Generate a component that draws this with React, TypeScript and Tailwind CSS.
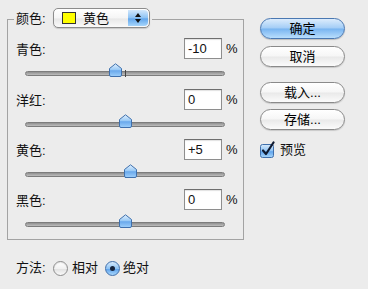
import React from "react";

const rows = [
  { label: "青色:", value: "-10", pos: -10, h: "h-[51px]" },
  { label: "洋红:", value: "0", pos: 0, h: "h-[50px]" },
  { label: "黄色:", value: "+5", pos: 5, h: "h-[50px]" },
  { label: "黑色:", value: "0", pos: 0, h: "h-[50px]" },
];

function Thumb() {
  return (
    <svg width="13" height="14" viewBox="0 0 13 14">
      <defs>
        <linearGradient id="thumbGrad" x1="0" y1="0" x2="0" y2="1">
          <stop offset="0" stopColor="#e4f1fd" />
          <stop offset="0.45" stopColor="#9ccbf6" />
          <stop offset="0.55" stopColor="#6aa9ec" />
          <stop offset="1" stopColor="#9fd0fb" />
        </linearGradient>
      </defs>
      <path d="M0.5 5.5 L6.5 0.8 L12.5 5.5 L12.5 12 Q12.5 13.5 11 13.5 L2 13.5 Q0.5 13.5 0.5 12 Z" fill="url(#thumbGrad)" stroke="#3f70ad" strokeWidth="1" />
    </svg>
  );
}

function Slider({ pos }: { pos: number }) {
  return (
    <div className="relative ml-[17px] mt-[4px] h-[14px] w-[200px]">
      <div className="absolute left-0 right-0 top-[8px] h-[5px] rounded-full border border-[#7c7c7c] bg-[linear-gradient(180deg,#8f8f8f,#bdbdbd)]" />
      <div className="absolute left-[100px] top-[7px] h-[7px] w-px bg-[#444]" />
      <div className="absolute top-0" style={{ left: 100 + pos - 6 }}>
        <Thumb />
      </div>
    </div>
  );
}

function AquaButton({ children, primary }: { children: React.ReactNode; primary?: boolean }) {
  return (
    <button
      className={
        primary
          ? "flex h-[21px] w-[85px] items-center justify-center rounded-full border border-[#4a78b2] bg-[linear-gradient(180deg,#dcecfc_0%,#a3cdf6_48%,#78b4f0_52%,#b9defd_100%)] text-[13px] text-black shadow-[0_1px_1px_rgba(0,0,0,0.2)]"
          : "flex h-[21px] w-[85px] items-center justify-center rounded-full border border-[#8a8a8a] bg-[linear-gradient(180deg,#ffffff_0%,#f6f6f6_48%,#e9e9e9_52%,#fbfbfb_100%)] text-[13px] text-black shadow-[0_1px_1px_rgba(0,0,0,0.15)]"
      }
    >
      {children}
    </button>
  );
}

function Radio({ checked }: { checked?: boolean }) {
  if (checked) {
    return (
      <span className="flex h-[15px] w-[15px] items-center justify-center rounded-full border border-[#3f6fab] bg-[linear-gradient(180deg,#d6eafc_0%,#8ec3f4_50%,#5fa3ec_55%,#a8d6fb_100%)]">
        <span className="h-[5px] w-[5px] rounded-full bg-[#16243d]" />
      </span>
    );
  }
  return (
    <span className="h-[15px] w-[15px] rounded-full border border-[#8c8c8c] bg-[linear-gradient(180deg,#ffffff_0%,#f1f1f1_50%,#e2e2e2_55%,#fafafa_100%)] shadow-[inset_0_1px_1px_rgba(0,0,0,0.1)]" />
  );
}

function Checkbox() {
  return (
    <svg width="17" height="17" viewBox="0 0 17 17">
      <defs>
        <linearGradient id="cbGrad" x1="0" y1="0" x2="0" y2="1">
          <stop offset="0" stopColor="#d8ebfc" />
          <stop offset="0.5" stopColor="#8fc3f4" />
          <stop offset="0.55" stopColor="#60a4ec" />
          <stop offset="1" stopColor="#a9d7fb" />
        </linearGradient>
      </defs>
      <rect x="0.5" y="3.5" width="13" height="13" rx="2" fill="url(#cbGrad)" stroke="#3f6fab" />
      <path d="M3 9.5 L6 13 L13.5 1.5" fill="none" stroke="#0f1a30" strokeWidth="2.2" strokeLinecap="round" strokeLinejoin="round" />
    </svg>
  );
}

export default function App() {
  return (
    <div className="flex h-[289px] w-[368px] overflow-hidden bg-[#ececec] font-['Liberation_Sans','Noto_Sans_CJK_SC',sans-serif] text-[13px] text-[#111]">
      <div className="w-[260px] shrink-0">
        <div className="relative ml-[7px] mt-[19px] h-[221px] w-[237px] border border-[#a3a3a3] pt-[18px]">
          <div className="absolute left-[6px] top-[-12px] flex h-[20px] items-center bg-[#ececec] px-[2px]">
            <span className="w-[37px] leading-none">颜色:</span>
            <div className="flex h-[20px] w-[97px] items-center rounded-[5px] border border-[#8c8c8c] bg-[linear-gradient(180deg,#ffffff_0%,#f5f5f5_50%,#e8e8e8_55%,#fafafa_100%)] shadow-[0_1px_1px_rgba(0,0,0,0.15)]">
              <span className="ml-[8px] h-[12px] w-[14px] border border-[#333] bg-[#ffff00]" />
              <span className="ml-[7px] flex-1 leading-none">黄色</span>
              <span className="mr-[1px] flex h-[16px] w-[20px] flex-col items-center justify-center gap-[2px] rounded-r-[4px] bg-[linear-gradient(180deg,#d3e8fc_0%,#8cc2f4_50%,#62a6ec_55%,#a6d5fb_100%)]">
                <svg width="6" height="4" viewBox="0 0 6 4"><path d="M0 4 L3 0 L6 4 Z" fill="#111" /></svg>
                <svg width="6" height="4" viewBox="0 0 6 4"><path d="M0 0 L6 0 L3 4 Z" fill="#111" /></svg>
              </span>
            </div>
          </div>
          {rows.map((r) => (
            <div key={r.label} className={r.h}>
              <div className="flex h-[21px] items-center pl-[8px]">
                <span className="w-[168px] pt-[2px] leading-none">{r.label}</span>
                <div className="flex h-[21px] w-[38px] items-center border border-[#8e8e8e] border-t-[#6e6e6e] bg-white pl-[3px] shadow-[inset_0_1px_1px_rgba(0,0,0,0.12)]">
                  {r.value}
                </div>
                <span className="ml-[4px]">%</span>
              </div>
              <Slider pos={r.pos} />
            </div>
          ))}
        </div>
        <div className="mt-[18px] flex h-[20px] items-center pl-[16px]">
          <span className="w-[37px]">方法:</span>
          <Radio />
          <span className="ml-[4px] w-[33px]">相对</span>
          <Radio checked />
          <span className="ml-[3px]">绝对</span>
        </div>
      </div>
      <div className="flex w-[85px] flex-col pt-[18px]">
        <AquaButton primary>确定</AquaButton>
        <div className="mt-[7px]">
          <AquaButton>取消</AquaButton>
        </div>
        <div className="mt-[15px]">
          <AquaButton>载入...</AquaButton>
        </div>
        <div className="mt-[6px]">
          <AquaButton>存储...</AquaButton>
        </div>
        <div className="mt-[10px] flex items-center">
          <Checkbox />
          <span className="ml-[3px]">预览</span>
        </div>
      </div>
    </div>
  );
}
